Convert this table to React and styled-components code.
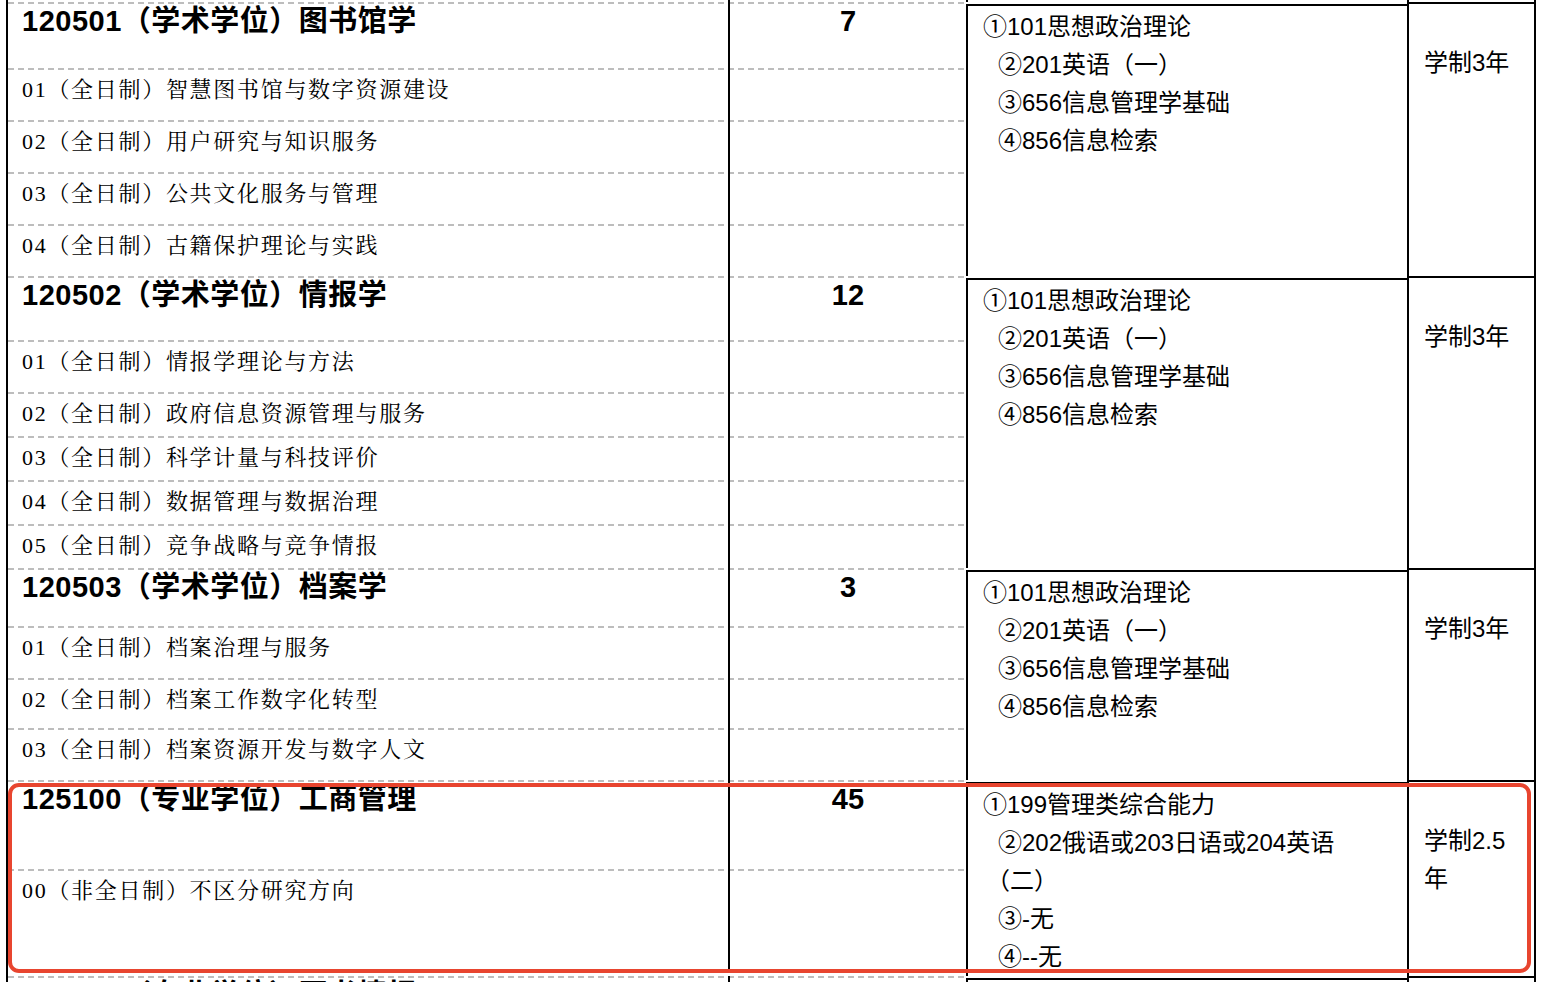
import React from "react";
import styled, { createGlobalStyle } from "styled-components";

const SANS = `"Liberation Sans", "Noto Sans CJK SC", sans-serif`;
const SERIF = `"Liberation Serif", "Noto Serif CJK SC", "Noto Sans CJK SC", serif`;

const GlobalStyle = createGlobalStyle`
  *, *::before, *::after { box-sizing: border-box; }
  html, body { margin: 0; padding: 0; background: #fff; }
  body { width: 1556px; height: 982px; overflow: hidden; }
`;

const groups = [
  {
    title: "120501（学术学位）图书馆学",
    num: "7",
    titleH: 66,
    rows: [
      ["01（全日制）智慧图书馆与数字资源建设", 52],
      ["02（全日制）用户研究与知识服务", 52],
      ["03（全日制）公共文化服务与管理", 52],
      ["04（全日制）古籍保护理论与实践", 52],
    ],
    exams: ["①101思想政治理论", "②201英语（一）", "③656信息管理学基础", "④856信息检索"],
    years: "学制3年",
  },
  {
    title: "120502（学术学位）情报学",
    num: "12",
    titleH: 64,
    rows: [
      ["01（全日制）情报学理论与方法", 52],
      ["02（全日制）政府信息资源管理与服务", 44],
      ["03（全日制）科学计量与科技评价", 44],
      ["04（全日制）数据管理与数据治理", 44],
      ["05（全日制）竞争战略与竞争情报", 44],
    ],
    exams: ["①101思想政治理论", "②201英语（一）", "③656信息管理学基础", "④856信息检索"],
    years: "学制3年",
  },
  {
    title: "120503（学术学位）档案学",
    num: "3",
    titleH: 58,
    rows: [
      ["01（全日制）档案治理与服务", 52],
      ["02（全日制）档案工作数字化转型", 50],
      ["03（全日制）档案资源开发与数字人文", 52],
    ],
    exams: ["①101思想政治理论", "②201英语（一）", "③656信息管理学基础", "④856信息检索"],
    years: "学制3年",
  },
  {
    title: "125100（专业学位）工商管理",
    num: "45",
    titleH: 89,
    rows: [["00（非全日制）不区分研究方向", 100]],
    exams: ["①199管理类综合能力", "②202俄语或203日语或204英语（二）", "③-无", "④--无"],
    years: "学制2.5年",
  },
  {
    title: "125500（专业学位）图书情报",
    num: "30",
    titleH: 66,
    rows: [],
    exams: ["①199管理类综合能力"],
    years: "学制2.5年",
  },
];

export default function App() {
  return (
    <Page>
      <GlobalStyle />
      <Table>
        <Stub>
          <div />
          <div />
          <div />
          <div />
        </Stub>
        {groups.map((g) => (
          <Group key={g.title}>
            <Majors>
              <Row $h={g.titleH}>
                <MajorTitle>{g.title}</MajorTitle>
                <NumCell>{g.num}</NumCell>
              </Row>
              {g.rows.map(([text, h]) => (
                <Row key={text} $h={h}>
                  <Direction>{text}</Direction>
                  <NumCell />
                </Row>
              ))}
            </Majors>
            <ExamCell>
              <div>{g.exams[0]}</div>
              <ExamRest>
                {g.exams.slice(1).map((e) => (
                  <div key={e}>{e}</div>
                ))}
              </ExamRest>
            </ExamCell>
            <YearCell>{g.years}</YearCell>
          </Group>
        ))}
      </Table>
      <Highlight />
    </Page>
  );
}

const Page = styled.div`
  position: relative;
  width: 1556px;
  height: 982px;
  overflow: hidden;
  padding-left: 6px;
  background: #fff;
`;

const Table = styled.div`
  width: 1530px;
  border-left: 2px solid #000;
  border-right: 2px solid #000;
  color: #000;
`;

const Stub = styled.div`
  display: grid;
  grid-template-columns: 720px 238px 441px 127px;
  height: 2px;
  & > div + div {
    border-left: 2px solid #000;
  }
`;

const Group = styled.div`
  display: grid;
  grid-template-columns: 958px 441px 127px;
`;

const Majors = styled.div`
  display: flex;
  flex-direction: column;
`;

const Row = styled.div`
  display: grid;
  grid-template-columns: 720px 238px;
  height: ${(p) => p.$h}px;
  flex: none;
  background: linear-gradient(to right, #bdbdbd 60%, transparent 60%) top left / 10px 2px repeat-x;
`;

const MajorTitle = styled.div`
  padding: 2px 14px 0;
  font-family: ${SANS};
  font-size: 29px;
  line-height: 35px;
  font-weight: 700;
  letter-spacing: 0.5px;
  white-space: nowrap;
`;

const Direction = styled.div`
  padding: 7px 14px 0;
  font-family: ${SERIF};
  font-size: 22px;
  line-height: 30px;
  letter-spacing: 1.7px;
  white-space: nowrap;
`;

const NumCell = styled.div`
  border-left: 2px solid #000;
  padding-top: 2px;
  text-align: center;
  font-family: ${SANS};
  font-size: 29px;
  line-height: 35px;
  font-weight: 700;
`;

const ExamCell = styled.div`
  margin-top: 2px;
  border-left: 2px solid #000;
  border-top: 2px solid #000;
  padding: 2px 24px 0 15px;
  font-family: ${SANS};
  font-size: 24px;
  line-height: 38px;
  text-spacing-trim: trim-start;
`;

const ExamRest = styled.div`
  padding-left: 15px;
`;

const YearCell = styled.div`
  border-left: 2px solid #000;
  border-top: 2px solid #000;
  padding: 40px 15px 0 15px;
  font-family: ${SANS};
  font-size: 24px;
  line-height: 38px;
`;

const Highlight = styled.div`
  position: absolute;
  left: 8px;
  top: 783px;
  width: 1523px;
  height: 190px;
  border: 4px solid #e8452f;
  border-radius: 11px;
  pointer-events: none;
`;
